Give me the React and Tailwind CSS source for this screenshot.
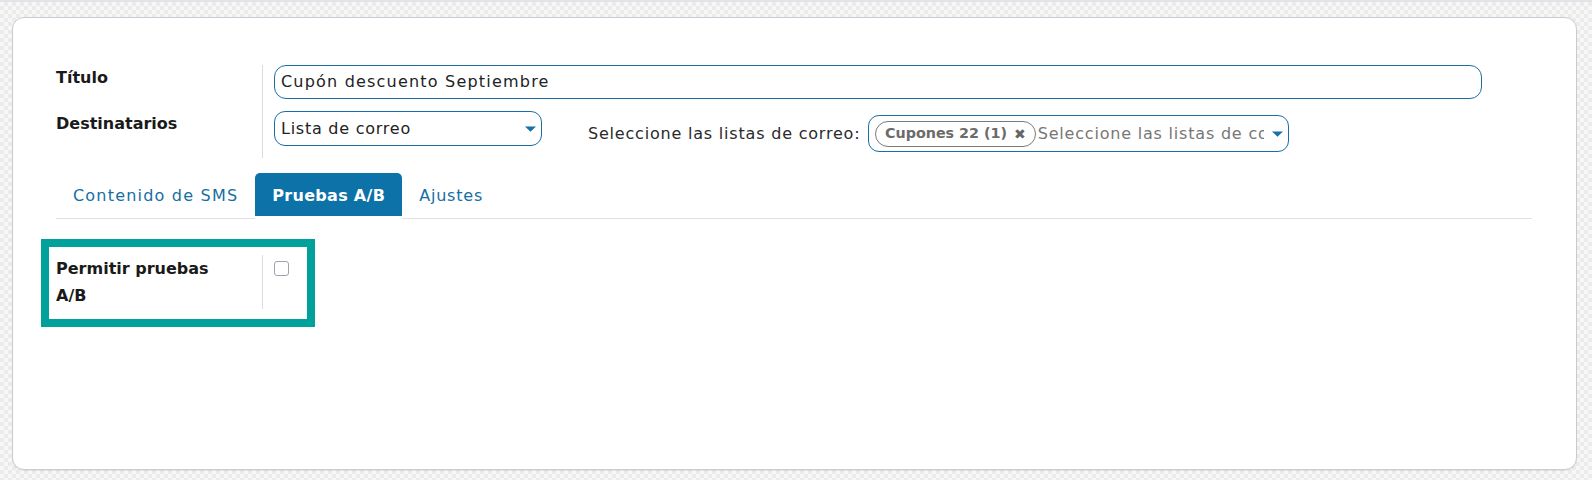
import React from 'react';

function Caret() {
    return (
        <svg width="11" height="6" viewBox="0 0 11 6" className="shrink-0">
            <path d="M0 0.5h11L5.5 5.8z" fill="#1671a8" />
        </svg>
    );
}

function Tab({ label, active, className = '' }) {
    if (active) {
        return (
            <div className="-mb-px flex h-[46px] items-start rounded-t-[5px] border-b-[3px] border-white bg-[#0c72a8] px-[17px] pt-[11px] text-[16px] font-bold tracking-[0.3px] text-white">
                {label}
            </div>
        );
    }
    return (
        <div className={`flex h-[45px] items-start px-[17px] pt-[11px] text-[16px] text-[#176ea3] ${className}`}>
            {label}
        </div>
    );
}

export default function App() {
    return (
        <div className="h-[480px] w-full overflow-hidden border-t-2 border-[#e3e3ea] bg-[#f2f2f2] bg-[image:repeating-conic-gradient(#ebebeb_0_25%,#f7f7f7_0_50%)] bg-[length:8px_8px] pl-[12px] pt-[15px] font-['DejaVu_Sans',sans-serif] text-[#222]">
            <div className="h-[453px] w-[1565px] rounded-[12px] border border-[#cacad4] bg-white pl-[43px] pt-[47px] shadow-[0_1px_1px_rgba(0,0,0,0.08)]">
                {/* titulo + destinatarios */}
                <div className="flex">
                    <div className="w-[207px] shrink-0 border-r border-[#dcdcdc] pt-[1px] text-[16px] font-bold leading-[24px] text-[#1a1a1a]">
                        <div className="h-[46px]">Título</div>
                        <div>Destinatarios</div>
                    </div>
                    <div className="pb-[6px] pl-[11px]">
                        <div className="flex h-[34px] w-[1208px] items-center rounded-[12px] border border-[#1b6ea4] px-[6px] text-[16px] tracking-[1.2px]">
                            Cupón descuento Septiembre
                        </div>
                        <div className="mt-[12px] flex items-start">
                            <div className="flex h-[35px] w-[268px] items-center justify-between rounded-[11px] border border-[#1b6ea4] pl-[6px] pr-[5px] text-[16px]">
                                <span className="tracking-[0.75px]">Lista de correo</span>
                                <Caret />
                            </div>
                            <div className="ml-[46px] mt-[4px] flex items-center">
                                <span className="w-[280px] whitespace-nowrap text-[16px] leading-[37px] tracking-[0.8px] text-[#2a2a2a]">Seleccione las listas de correo:</span>
                                <div className="flex h-[37px] w-[421px] items-center rounded-[11px] border border-[#1b6ea4] pl-[6px] pr-[5px]">
                                    <div className="flex h-[26px] shrink-0 items-center rounded-full border-[1.5px] border-[#7a7a7a] pl-[9px] pr-[9px] text-[14.3px] font-bold text-[#6b6b6b]">
                                        <span>Cupones 22 (1)</span>
                                        <span className="ml-[7px] text-[14px] leading-none text-[#666]">✖</span>
                                    </div>
                                    <span className="ml-[2px] flex-1 overflow-hidden whitespace-nowrap text-[16px] tracking-[0.8px] text-[#777]">
                                        Seleccione las listas de correo
                                    </span>
                                    <span className="ml-[8px]"><Caret /></span>
                                </div>
                            </div>
                        </div>
                    </div>
                </div>

                {/* tabs */}
                <div className="mt-[15px] flex w-[1476px] items-end border-b border-[#dfe1e5]">
                    <Tab label="Contenido de SMS" className="tracking-[1.2px]" />
                    <Tab label="Pruebas A/B" active />
                    <Tab label="Ajustes" className="tracking-[0.8px]" />
                </div>

                {/* pruebas A/B */}
                <div className="-ml-[15px] mt-[20px] flex w-[274px] border-[8px] border-[#00a19b] pl-[7px]">
                    <div className="mb-[10px] mt-[8px] w-[207px] shrink-0 border-r border-[#dcdcdc] text-[16px] font-bold leading-[27px] text-[#1a1a1a]">
                        Permitir pruebas
                        <br />
                        A/B
                    </div>
                    <div className="pl-[11px] pt-[14px]">
                        <div className="h-[15px] w-[15px] rounded-[3px] border border-[#9ea3ae] bg-white" />
                    </div>
                </div>
            </div>
        </div>
    );
}
